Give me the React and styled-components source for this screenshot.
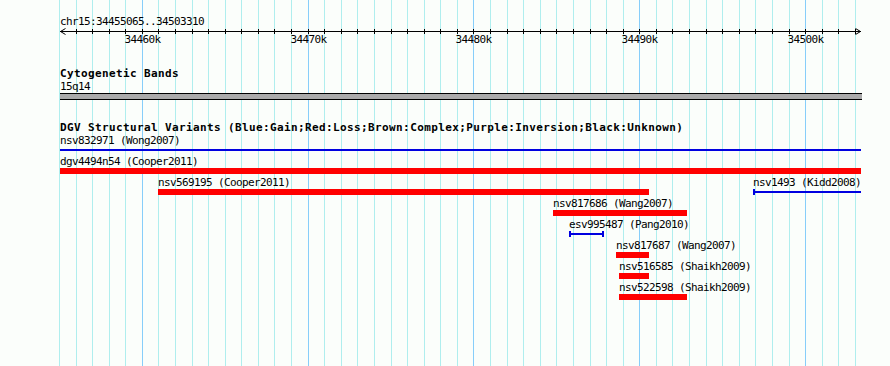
import React from "react"
import styled, { createGlobalStyle } from "styled-components"

const VIEW_START = 34455065
const VIEW_END = 34503310
const TRACK_LEFT = 60
const TRACK_WIDTH = 800
const BP_PX = TRACK_WIDTH / (VIEW_END - VIEW_START)

const toX = (pos) => Math.round((pos - VIEW_START) * BP_PX)

const GRID = []
for (let p = 34455000; p <= 34503000; p += 1000) GRID.push(p)

const ROWS = [
  [{ name: "nsv832971", study: "Wong2007", kind: "gain", start: 34440000, end: 34520000 }],
  [{ name: "dgv4494n54", study: "Cooper2011", kind: "loss", start: 34400000, end: 34600000 }],
  [
    { name: "nsv569195", study: "Cooper2011", kind: "loss", start: 34460975, end: 34490585 },
    { name: "nsv1493", study: "Kidd2008", kind: "gain", start: 34496857, end: 34520000 },
  ],
  [{ name: "nsv817686", study: "Wang2007", kind: "loss", start: 34484796, end: 34492877 }],
  [{ name: "esv995487", study: "Pang2010", kind: "gain", start: 34485761, end: 34487871 }],
  [{ name: "nsv817687", study: "Wang2007", kind: "loss", start: 34488595, end: 34490585 }],
  [{ name: "nsv516585", study: "Shaikh2009", kind: "loss", start: 34488776, end: 34490585 }],
  [{ name: "nsv522598", study: "Shaikh2009", kind: "loss", start: 34488776, end: 34492877 }],
]

const GlobalStyle = createGlobalStyle`
  body {
    margin: 0;
    background: #fbfefb;
  }
`

const Canvas = styled.div`
  position: relative;
  width: 890px;
  height: 366px;
  overflow: hidden;
  background: #fbfefb;
  color: #000;
  font-family: "DejaVu Sans Mono", "Liberation Mono", monospace;
  font-size: 11px;
  letter-spacing: -0.62px;
`

const GridLayer = styled.div`
  position: absolute;
  inset: 0;
`

const GridLine = styled.div`
  position: absolute;
  top: 0;
  bottom: 0;
  width: 1px;
  background: ${(p) => (p.$major ? "#87cefa" : "#afeeee")};
`

const Tracks = styled.div`
  position: relative;
  display: flex;
  flex-direction: column;
  margin-left: ${TRACK_LEFT}px;
  width: ${TRACK_WIDTH + 2}px;
  padding-top: 16px;
`

const PlainText = styled.div`
  line-height: 11px;
  height: 11px;
  white-space: nowrap;
  margin-top: ${(p) => p.$before || 0}px;
`

const Ruler = styled.div`
  position: relative;
  height: 19px;

  svg {
    display: block;
  }
`

const TickLabel = styled.div`
  position: absolute;
  top: 7px;
  line-height: 11px;
  transform: translateX(-50%);
  white-space: nowrap;
`

const Track = styled.section`
  display: flex;
  flex-direction: column;
  margin-top: ${(p) => p.$gap}px;
`

const TrackTitle = styled.div`
  font-weight: bold;
  letter-spacing: 0.38px;
  line-height: 13px;
  height: 13px;
  white-space: nowrap;
  margin-bottom: ${(p) => p.$after || 0}px;
`

const Band = styled.div`
  margin-top: 1px;
  height: 5px;
  border-top: 1px solid #000;
  border-bottom: 1px solid #000;
  background: #aaaaaa;
`

const Row = styled.div`
  position: relative;
  height: 21px;
`

const Feature = styled.div`
  position: absolute;
  top: 0;
`

const FeatureLabel = styled.div`
  line-height: 11px;
  height: 11px;
  white-space: nowrap;
`

const LossBar = styled.div`
  margin-top: 1px;
  height: 6px;
  background: #ff0000;
`

const GainSpan = styled.div`
  position: relative;
  margin-top: 1px;
  height: 6px;
`

const GainLine = styled.div`
  position: absolute;
  top: 2px;
  left: 0;
  right: 0;
  height: 2px;
  background: #0000e0;
`

const GainCap = styled.div`
  position: absolute;
  top: 0;
  ${(p) => (p.$side === "left" ? "left: 0;" : "right: 0;")}
  width: 2px;
  height: 6px;
  background: #0000e0;
`

const RulerAxis = () => {
  const w = TRACK_WIDTH + 2
  return (
    <svg width={w} height="9" viewBox={`0 0 ${w} 9`}>
      <line x1="0" y1="4.5" x2={w - 1} y2="4.5" stroke="#000" strokeWidth="1" />
      <polyline points="5.5,1.5 0.5,4.5 5.5,7.5" fill="none" stroke="#000" strokeWidth="1" />
      <polyline points={`${w - 6.5},1.5 ${w - 1.5},4.5 ${w - 6.5},7.5`} fill="none" stroke="#000" strokeWidth="1" />
      {GRID.filter((p) => p > VIEW_START).map((p) => (
        <line key={p} x1={toX(p) + 0.5} y1="2" x2={toX(p) + 0.5} y2="7" stroke="#000" strokeWidth="1" />
      ))}
    </svg>
  )
}

const Variant = ({ f }) => {
  const x0 = Math.max(0, toX(f.start))
  const x1 = Math.min(TRACK_WIDTH + 1, toX(f.end))
  return (
    <Feature style={{ left: x0 }}>
      <FeatureLabel>
        {f.name} ({f.study})
      </FeatureLabel>
      {f.kind === "loss" ? (
        <LossBar style={{ width: x1 - x0 }} />
      ) : (
        <GainSpan style={{ width: x1 - x0 }}>
          <GainLine />
          {f.start >= VIEW_START && <GainCap $side="left" />}
          {f.end <= VIEW_END && <GainCap $side="right" />}
        </GainSpan>
      )}
    </Feature>
  )
}

export default function App() {
  return (
    <>
      <GlobalStyle />
      <Canvas>
        <GridLayer>
          {GRID.map((p) => (
            <GridLine key={p} $major={p % 10000 === 0} style={{ left: TRACK_LEFT + toX(p) }} />
          ))}
        </GridLayer>
        <Tracks>
          <PlainText>chr15:34455065..34503310</PlainText>
          <Ruler>
            <RulerAxis />
            {GRID.filter((p) => p % 10000 === 0).map((p) => (
              <TickLabel key={p} style={{ left: toX(p) + 0.5 }}>
                {p / 1000}k
              </TickLabel>
            ))}
          </Ruler>
          <Track $gap={21}>
            <TrackTitle>Cytogenetic Bands</TrackTitle>
            <PlainText $before={1}>15q14</PlainText>
            <Band />
          </Track>
          <Track $gap={21}>
            <TrackTitle $after={1}>
              DGV Structural Variants (Blue:Gain;Red:Loss;Brown:Complex;Purple:Inversion;Black:Unknown)
            </TrackTitle>
            {ROWS.map((row, i) => (
              <Row key={i}>
                {row.map((f) => (
                  <Variant key={f.name} f={f} />
                ))}
              </Row>
            ))}
          </Track>
        </Tracks>
      </Canvas>
    </>
  )
}
